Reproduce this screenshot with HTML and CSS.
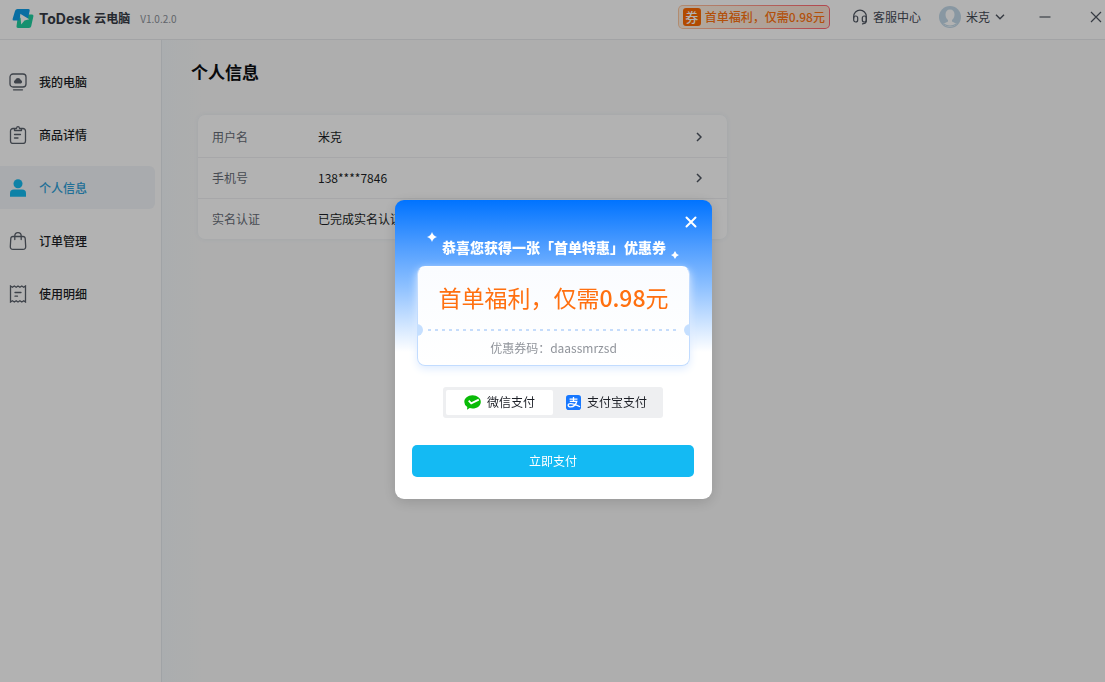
FILE: index.html
```html
<!DOCTYPE html>
<html lang="zh-CN">
<head>
<meta charset="utf-8">
<meta name="viewport" content="width=device-width, initial-scale=1">
<title>ToDesk云电脑</title>
<link rel="stylesheet" href="styles.css">
</head>
<body>
<div class="app">
  <header class="topbar">
    <svg class="logo" viewBox="0 0 22 20" aria-hidden="true">
      <path d="M15.500 5.500H20q1.800 0 1.400 1.800l-2.200 9.900q-.4 1.800-2.200 1.800H6q-1.800 0-1.500-1.700L5.500 10z" fill="#20cfa0"/>
      <path d="M5.500 0h11q1.600 0 1.200 1.500L16 9.500 8.500 6 7.300 11.500H1.800Q.3 11.500.6 10L3 2Q3.600 0 5.500 0z" fill="#0d9ee8"/>
      <path d="M8.200 4.800l9 5.500-4.700 1.200-3.300 4z" fill="#fff"/>
    </svg>
    <span class="brand">ToDesk</span><span class="brand-cn">云电脑</span>
    <span class="version">V1.0.2.0</span>
    <button class="promo" type="button"><span class="promo-tag">券</span>首单福利，仅需0.98元</button>
    <button class="top-link support" type="button">
      <svg class="icon-16" viewBox="0 0 16 16" fill="none" stroke="#4e5560" stroke-width="1.200" stroke-linecap="round" aria-hidden="true">
        <path d="M1.700 9V7.500a6.300 6.300 0 0 1 12.600 0V12q0 2.500-3.800 2.900"/>
        <rect x="1.700" y="7" width="4" height="6" rx="2"/><rect x="10.300" y="7" width="4" height="6" rx="2"/>
      </svg>客服中心
    </button>
    <button class="top-link account" type="button">
      <svg class="avatar" viewBox="0 0 22 22" aria-hidden="true">
        <circle cx="11" cy="11" r="11" fill="#c3d9e8"/>
        <path d="M11 3.500c3 0 4.500 2 4.500 5 0 2.500-1 4.500-2.500 5.500v1.500l5 2.500q-3 3-7 3t-7-3l5-2.500V14C7.500 13 6.500 11 6.500 8.500c0-3 1.500-5 4.500-5z" fill="#fff"/>
        <path d="M5 17.500q6 4 12 0l1 .8q-7 4.500-14 0z" fill="#c3d9e8"/>
      </svg>米克
      <svg class="caret" viewBox="0 0 10 6" fill="none" stroke="#4e5560" stroke-width="1.400" aria-hidden="true"><path d="M1 .8l4 4 4-4"/></svg>
    </button>
    <button class="win minimize" type="button" aria-label="最小化"><svg viewBox="0 0 12 12" stroke="#555b66" stroke-width="1.200" aria-hidden="true"><path d="M0.500 6h11"/></svg></button>
    <button class="win" type="button" aria-label="关闭窗口"><svg viewBox="0 0 12 12" stroke="#4e5560" stroke-width="1.200" aria-hidden="true"><path d="M1 1l10 10M11 1L1 11"/></svg></button>
  </header>
  <div class="body">
    <nav class="sidebar">
      <a class="nav-item" href="#pc">
        <svg viewBox="0 0 18 18" fill="none" stroke="#5a606b" stroke-width="1.300" stroke-linecap="round" aria-hidden="true"><rect x="1" y="1" width="16" height="13" rx="3"/><path d="M4.500 16.800h9"/><path d="M6 10.500a1.900 1.900 0 0 1 .2-3.500 3 3 0 0 1 5.600 0 1.900 1.900 0 0 1 .2 3.500z" fill="#5a606b" stroke="none"/></svg>我的电脑</a>
      <a class="nav-item" href="#goods">
        <svg viewBox="0 0 18 18" fill="none" stroke="#5a606b" stroke-width="1.300" stroke-linecap="round" stroke-linejoin="round" aria-hidden="true"><path d="M5.500 2.500H4A2.500 2.500 0 0 0 1.500 5v10A2.500 2.500 0 0 0 4 17.500h10a2.500 2.500 0 0 0 2.500-2.500V5A2.500 2.500 0 0 0 14 2.500h-1.500M5.500 4.500v-2h2q.2-1.800 1.500-1.800t1.500 1.800h2v2zM5.500 8.500h6M5.500 12h3.500"/></svg>商品详情</a>
      <a class="nav-item active" href="#profile" aria-current="page">
        <svg viewBox="0 0 18 18" fill="#14baf0" aria-hidden="true"><circle cx="9" cy="4.800" r="4.500"/><path d="M1 17.700v-3.500Q1 10.500 5 10.500h8q4 0 4 3.700v3.500z"/></svg>个人信息</a>
      <a class="nav-item" href="#orders">
        <svg viewBox="0 0 18 18" fill="none" stroke="#5a606b" stroke-width="1.300" stroke-linecap="round" aria-hidden="true"><path d="M4 4.500h10Q16 4.500 16.200 6.500l.5 8Q16.800 17.300 14 17.300H4Q1.200 17.300 1.300 14.500l.5-8Q2 4.500 4 4.500zM5.800 7.500V4Q5.800.7 9 .7T12.200 4v3.500"/></svg>订单管理</a>
      <a class="nav-item" href="#usage">
        <svg viewBox="0 0 18 18" fill="none" stroke="#5a606b" stroke-width="1.300" stroke-linecap="round" aria-hidden="true"><path d="M1.500 1l1.900 1.300L5.300 1l1.900 1.300L9 1l1.900 1.300L12.800 1l1.900 1.300L16.500 1v16l-1.800-1.300-1.900 1.300-1.900-1.300L9 17l-1.800-1.300L5.300 17l-1.900-1.300L1.500 17zM6 7.500h6M6 11.200h2.500"/></svg>使用明细</a>
    </nav>
    <main class="content">
      <h1 class="page-title">个人信息</h1>
      <dl class="card">
        <div class="row"><dt>用户名</dt><dd>米克</dd><svg class="chev" viewBox="0 0 6 10" aria-hidden="true"><path d="M1 1l4 4-4 4"/></svg></div>
        <div class="row"><dt>手机号</dt><dd>138****7846</dd><svg class="chev" viewBox="0 0 6 10" aria-hidden="true"><path d="M1 1l4 4-4 4"/></svg></div>
        <div class="row"><dt>实名认证</dt><dd>已完成实名认证</dd></div>
      </dl>
    </main>
  </div>
</div>

<div class="overlay">
  <form class="modal" role="dialog" aria-modal="true" aria-labelledby="modal-title">
    <button class="close" type="button" aria-label="关闭"><svg viewBox="0 0 12 12" stroke="#fff" stroke-width="2" stroke-linecap="round" aria-hidden="true"><path d="M1.500 1.500l9 9M10.500 1.500l-9 9"/></svg></button>
    <div class="headline">
      <svg class="spark" viewBox="0 0 10 10" fill="#fff" aria-hidden="true"><path d="M5 0Q6.200 3.800 10 5 6.200 6.200 5 10 3.800 6.200 0 5 3.800 3.800 5 0z"/></svg>
      <h2 id="modal-title">恭喜您获得一张「首单特惠」优惠券</h2>
      <svg class="spark small" viewBox="0 0 10 10" fill="#fff" aria-hidden="true"><path d="M5 0Q6.200 3.800 10 5 6.200 6.200 5 10 3.800 6.200 0 5 3.800 3.800 5 0z"/></svg>
    </div>
    <section class="ticket">
      <p class="offer">首单福利，仅需<b>0.98</b>元</p>
      <div class="tear"><i class="notch left"></i><svg class="dashes" aria-hidden="true"><line x1="0" y1="1" x2="100%" y2="1" stroke="#c5dcfb" stroke-width="2" stroke-dasharray="3 4"/></svg><i class="notch right"></i></div>
      <p class="code">优惠券码：daassmrzsd</p>
    </section>
    <div class="pay" role="radiogroup" aria-label="支付方式">
      <label class="pay-option"><input type="radio" name="pay" checked>
        <svg class="wechat" viewBox="0 0 17 15" aria-hidden="true"><path d="M8.500.3c4.700 0 8.300 3 8.300 6.600s-3.600 6.600-8.300 6.600q-1.500 0-2.800-.4L3 14.700l.3-2.600Q.3 10.200.3 6.900C.3 3.300 3.800.3 8.500.3z" fill="#09bb07"/><path d="M4.700 5.700l2.500 2.600 7.600-3.700" fill="none" stroke="#fff" stroke-width="1.800"/></svg>微信支付</label>
      <label class="pay-option"><input type="radio" name="pay">
        <svg class="alipay" viewBox="0 0 16 16" aria-hidden="true"><rect width="16" height="16" rx="3" fill="#1677ff"/><path d="M3.800 4.300h8.400M8 2v4.700M4 6.700h7.500Q10 12.700 5 12.700q-2.700 0-2.700-1.800T5 9.100q3 0 10 3.400" fill="none" stroke="#fff" stroke-width="1.400"/></svg>支付宝支付</label>
    </div>
    <button class="submit" type="button">立即支付</button>
  </form>
</div>
</body>
</html>
```

FILE: styles.css
```css
* { box-sizing: border-box; }

body, h1, h2, p, dl, dd { margin: 0; }

body {
  font: 12px/18px "Noto Sans CJK SC", "Noto Sans", sans-serif;
  color: #1c1f26;
  background: #f9f9f9;
}

button {
  font: inherit;
  color: inherit;
  border: 0;
  padding: 0;
  background: none;
  cursor: pointer;
}

svg { display: block; flex: none; }

.app { min-height: 100vh; display: flex; flex-direction: column; }

.topbar {
  height: 40px;
  display: flex;
  align-items: center;
  padding: 0 3px 6px 12px;
  background: #fff;
  border-bottom: 1px solid #e8eaec;
}

.logo { width: 22px; height: 20px; margin: 4px 5px 0 0; }
.brand { font: 700 14px/20px Inter, sans-serif; color: #353a44; margin-top: 4px; }
.brand-cn { font-weight: 700; line-height: 20px; color: #353a44; margin: 2px 0 0 4px; }
.version { font-size: 10px; color: #8c9199; margin: 5px auto 0 10px; }

.promo {
  display: flex;
  align-items: center;
  gap: 4px;
  height: 24px;
  padding: 0 4px;
  border: 1px solid transparent;
  border-radius: 5px;
  font-weight: 500;
  color: #ff7410;
  background: linear-gradient(90deg, #fff1e3, #f9e2d4) padding-box, linear-gradient(90deg, #ffc9a0, #ff6470) border-box;
}

.promo-tag {
  width: 18px;
  height: 18px;
  border-radius: 3px;
  font-size: 13px;
  color: #fff;
  background: #ff6a00;
}

.top-link { display: flex; align-items: center; color: #444a55; }
.support { gap: 5px; margin-left: 22px; }
.account { gap: 5px; margin-left: 18px; }
.icon-16 { width: 16px; height: 16px; }
.avatar { width: 22px; height: 22px; }
.caret { width: 10px; height: 6px; }
.win svg { width: 12px; height: 12px; }
.minimize { margin: 0 39px 0 34px; }

.body { flex: 1; display: flex; }

.sidebar {
  width: 162px;
  flex: none;
  display: flex;
  flex-direction: column;
  gap: 10px;
  padding: 20px 6px 0 0;
  background: #fff;
  border-right: 1px solid #e6eaee;
}

.nav-item {
  height: 43px;
  display: flex;
  align-items: center;
  gap: 12px;
  padding-left: 9px;
  border-radius: 0 6px 6px 0;
  font-weight: 500;
  color: inherit;
  text-decoration: none;
}

.nav-item svg { width: 18px; height: 18px; }
.nav-item.active { color: #2e9fd8; background: #f2f5f9; }

.content {
  flex: 1;
  padding: 20px 29px;
  background: linear-gradient(90deg, #f4f8fb, #f9f9f9 40px);
}

.page-title { font-size: 17px; line-height: 24px; font-weight: 700; color: #0c0e12; }

.card {
  max-width: 529px;
  margin: 31px 0 0 7px;
  padding-top: 1px;
  background: #fff;
  border-radius: 7px;
  box-shadow: 0 0 5px #e9eff4;
}

.row { display: flex; align-items: center; min-height: 41px; padding: 0 25px 0 14px; }
.row + .row { border-top: 1px solid #eff0f2; }
.row dt { width: 106px; color: #666c76; }
.row dd { flex: 1; }
.chev { width: 6px; height: 10px; fill: none; stroke: #4e5560; stroke-width: 1.5; }

.overlay {
  position: fixed;
  inset: 0;
  display: flex;
  align-items: center;
  justify-content: center;
  padding: 16px 0 0 2px;
  background: rgba(0, 0, 0, 0.3);
}

.modal {
  width: 317px;
  display: flex;
  flex-direction: column;
  padding: 16px 18px 22px 17px;
  border-radius: 9px;
  background: #fff linear-gradient(#0073ff, #4d9cff 45px, #8bbfff 85px, #fff) top / 100% 152px no-repeat;
  box-shadow: 0 3px 14px rgba(0, 0, 0, 0.15);
}

.close { align-self: flex-end; width: 12px; height: 12px; margin-right: -3px; }
.close svg { width: 12px; height: 12px; }

.headline { display: flex; justify-content: center; gap: 5px; height: 38px; padding-top: 4px; }
.headline h2 { font-size: 14px; line-height: 30px; font-weight: 900; color: #fff; white-space: nowrap; }
.spark { width: 10px; height: 10px; }
.spark.small { width: 8px; height: 8px; align-self: flex-end; margin-bottom: 7px; }

.ticket {
  margin: 0 4px 0 5px;
  border: 1px solid #c2dcff;
  border-top-color: #fff;
  border-radius: 8px;
  background: linear-gradient(#fafcff, #fff);
  box-shadow: 0 3px 8px #dfecff;
  text-align: center;
}

.offer { font-size: 23px; line-height: 34px; padding: 13px 0 10px; color: #ff7010; white-space: nowrap; }
.offer b { font-weight: 500; }

.tear { display: flex; align-items: center; justify-content: space-between; height: 12px; margin: 0 -1px; }
.notch { width: 6px; height: 12px; background: #c5dfff; }
.notch.left { border-radius: 0 6px 6px 0; }
.notch.right { border-radius: 6px 0 0 6px; }
.dashes { flex: 1; min-width: 0; height: 2px; margin: 0 5px; }
.code { line-height: 18px; padding: 3px 0 8px; color: #90949b; }

.pay {
  align-self: center;
  display: flex;
  margin-top: 21px;
  padding: 3px;
  border-radius: 3px;
  background: #eeeff1;
}

.pay-option {
  width: 107px;
  height: 25px;
  display: flex;
  align-items: center;
  justify-content: center;
  gap: 6px;
  border-radius: 2px;
  cursor: pointer;
}

.pay-option input { position: absolute; opacity: 0; }
.pay-option:has(input:checked) { background: #fff; }
.wechat { width: 17px; height: 15px; }
.alipay { width: 15px; height: 15px; }

.submit {
  height: 32px;
  margin-top: 27px;
  border-radius: 5px;
  color: #fff;
  background: #14baf3;
}
```
